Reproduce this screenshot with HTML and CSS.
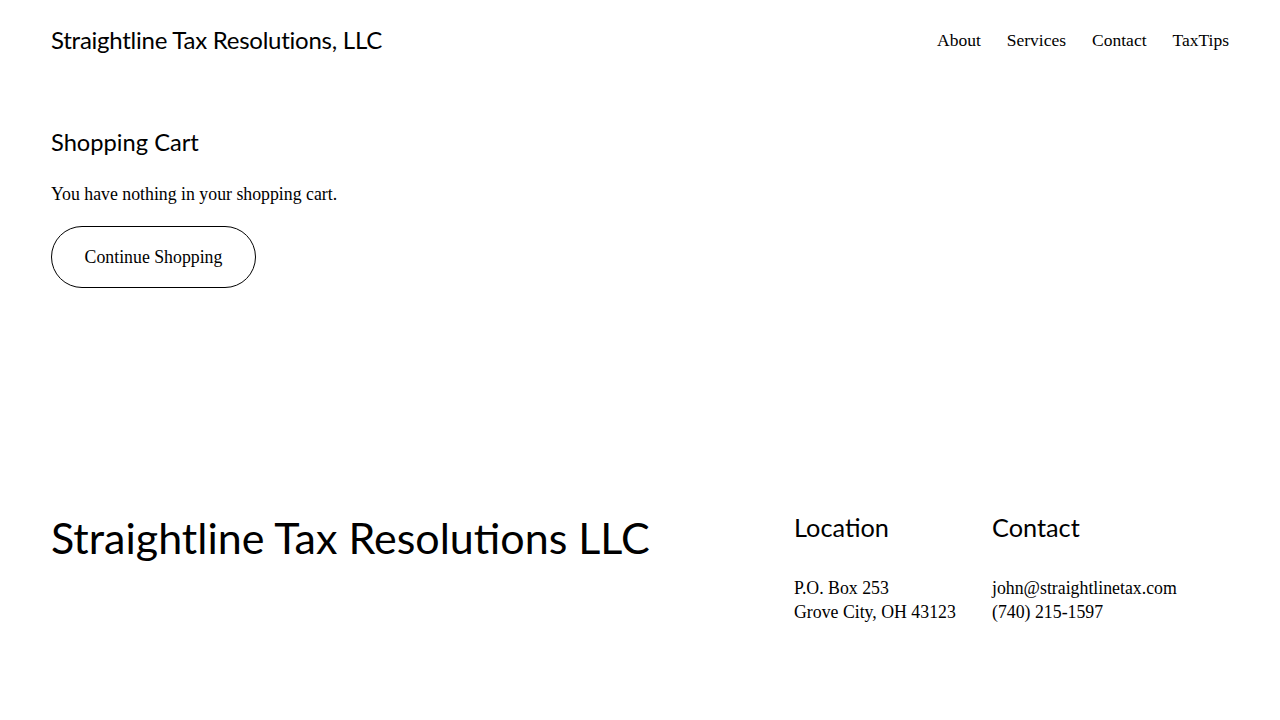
FILE: index.html
```html
<!DOCTYPE html>
<html lang="en">
<head>
<meta charset="utf-8">
<title>Shopping Cart — Straightline Tax Resolutions, LLC</title>
<link rel="stylesheet" href="styles.css">
</head>
<body>
<header class="site-header">
  <a class="brand" href="#">Straightline Tax Resolutions, LLC</a>
  <nav class="nav">
    <a href="#">About</a>
    <a href="#">Services</a>
    <a href="#">Contact</a>
    <a href="#">TaxTips</a>
  </nav>
</header>
<main class="cart">
  <h1 class="cart-title">Shopping Cart</h1>
  <p class="cart-empty">You have nothing in your shopping cart.</p>
  <a class="btn" href="#">Continue Shopping</a>
</main>
<footer class="site-footer">
  <div class="footer-brand">Straightline Tax Resolutions LLC</div>
  <div class="footer-cols">
    <div class="footer-col loc">
      <h2>Location</h2>
      <p>P.O. Box 253<br>Grove City, OH 43123</p>
    </div>
    <div class="footer-col">
      <h2>Contact</h2>
      <p>john@straightlinetax.com<br>(740) 215-1597</p>
    </div>
  </div>
</footer>
</body>
</html>
```

FILE: styles.css
```css
* { box-sizing: border-box; }
html, body { margin: 0; padding: 0; background: #fff; color: #000; }
body {
  font-family: "Liberation Serif", "DejaVu Serif", serif;
  font-size: 17.8px;
  line-height: 24px;
  width: 1280px;
  height: 720px;
  overflow: hidden;
}
a { color: inherit; text-decoration: none; }
.site-header {
  display: flex;
  justify-content: space-between;
  align-items: center;
  padding: 0 51px 0 51px;
  height: 80px;
}
.brand {
  font-family: "Lato", "Open Sans", sans-serif;
  font-size: 24px;
  letter-spacing: -0.25px;
  line-height: 32px;
}
.nav { display: flex; gap: 26px; font-size: 17.5px; }
.cart { padding: 46px 51px 0 51px; height: 430px; }
.cart-title {
  font-family: "Lato", "Open Sans", sans-serif;
  font-weight: 400;
  font-size: 23.7px;
  line-height: 32px;
  margin: 0 0 24px 0;
}
.cart-empty { margin: 0 0 20px 0; }
.btn {
  display: inline-flex;
  align-items: center;
  justify-content: center;
  width: 205px;
  height: 62px;
  border: 1px solid #000;
  border-radius: 31px;
}
.site-footer {
  display: flex;
  justify-content: space-between;
  padding: 0 51px 0 51px;
}
.footer-brand {
  font-family: "Lato", "Open Sans", sans-serif;
  font-size: 43px;
  line-height: 56px;
}
.footer-cols { display: flex; width: 435px; }
.footer-col { width: 198px; }
.footer-col h2 {
  font-family: "Lato", "Open Sans", sans-serif;
  font-weight: 400;
  font-size: 25.3px;
  line-height: 34px;
  margin: 0 0 32px 0;
}
.footer-col p { margin: 0; font-size: 17.8px; }
```
